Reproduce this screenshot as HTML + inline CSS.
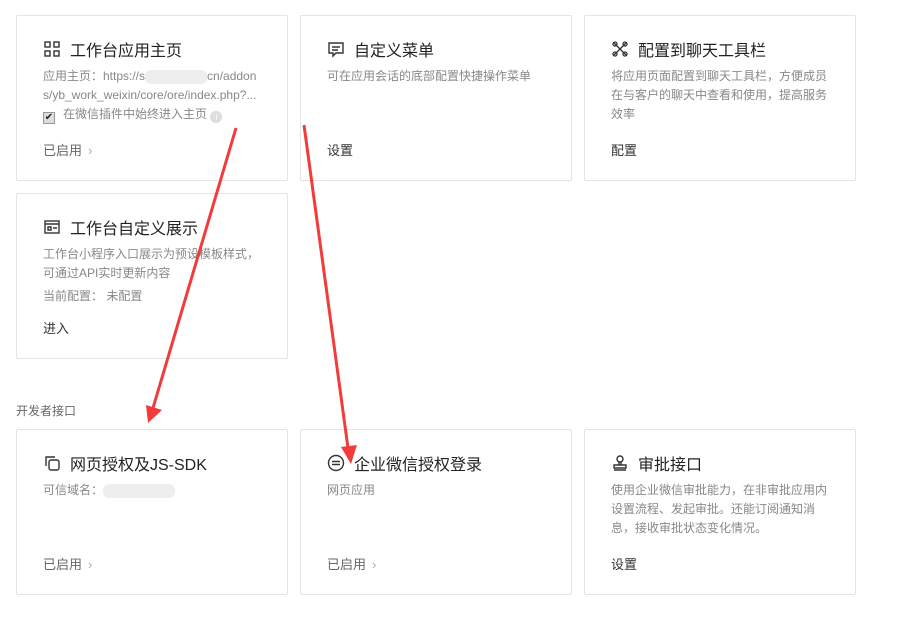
<!DOCTYPE html>
<html><head><meta charset="utf-8"><style>
*{margin:0;padding:0;box-sizing:border-box}
body{width:913px;height:620px;background:#fff;font-family:"Liberation Sans","Noto Sans CJK SC",sans-serif;position:relative;overflow:hidden}
.card{position:absolute;width:272px;height:166px;border:1px solid #e4e4e4;border-radius:2px;background:#fff}
.t{position:absolute;left:26px;top:23px;font-size:16px;color:#222;display:flex;align-items:center;height:20px}
.t svg{margin-right:9px}
.d{position:absolute;left:26px;top:51px;width:224px;font-size:12px;color:#888;line-height:19px}
.s{position:absolute;left:26px;top:124px;font-size:13px;color:#666}
.s i{font-style:normal;color:#aaa;margin-left:6px}
.l{position:absolute;left:26px;top:124px;font-size:13px;color:#333}
.blur{display:inline-block;background:#eee;height:14px;vertical-align:middle;border-radius:6px}
.sec{position:absolute;left:16px;top:402px;font-size:12px;color:#666}
.nw{white-space:nowrap;overflow:hidden}
</style></head><body>
<div class="card" style="left:16px;top:15px">
 <div class="t"><svg width="18" height="18" viewBox="0 0 18 18" fill="none" stroke="#333" stroke-width="1.4"><rect x="2" y="2" width="5" height="5"/><rect x="11" y="2" width="5" height="5"/><rect x="2" y="11" width="5" height="5"/><rect x="11" y="11" width="5" height="5"/></svg>工作台应用主页</div>
 <div class="d"><div class="nw">应用主页：https://s<span class="blur" style="width:62px"></span>cn/addon</div><div class="nw">s/yb_work_weixin/core/ore/index.php?...</div><div class="nw"><span style="display:inline-block;width:12px;height:12px;border:1px solid #999;background:#ddd;vertical-align:-2px;margin-right:8px;font-size:10px;line-height:10px;color:#222;text-align:center">✔</span>在微信插件中始终进入主页 <span style="display:inline-block;width:12px;height:12px;border-radius:50%;background:#ddd;color:#fff;font-size:9px;text-align:center;line-height:12px;vertical-align:-2px">i</span></div></div>
 <div class="s">已启用<i>›</i></div>
</div>
<div class="card" style="left:300px;top:15px">
 <div class="t"><svg width="18" height="18" viewBox="0 0 18 18" fill="none" stroke="#333" stroke-width="1.4"><path d="M2 3h14v10H9l-3 3v-3H2z"/><path d="M5 7h8M5 10h6"/></svg>自定义菜单</div>
 <div class="d">可在应用会话的底部配置快捷操作菜单</div>
 <div class="l">设置</div>
</div>
<div class="card" style="left:584px;top:15px">
 <div class="t"><svg width="18" height="18" viewBox="0 0 18 18" fill="none" stroke="#333" stroke-width="1.3"><path d="M3 3l12 12M15 3L3 15"/><circle cx="4" cy="4" r="2"/><circle cx="14" cy="4" r="2"/><circle cx="4" cy="14" r="2"/><circle cx="14" cy="14" r="2"/></svg>配置到聊天工具栏</div>
 <div class="d">将应用页面配置到聊天工具栏，方便成员在与客户的聊天中查看和使用，提高服务效率</div>
 <div class="l">配置</div>
</div>
<div class="card" style="left:16px;top:193px">
 <div class="t"><svg width="18" height="18" viewBox="0 0 18 18" fill="none" stroke="#333" stroke-width="1.4"><rect x="2" y="3" width="14" height="12"/><path d="M2 6h14M5 9h3v3H5zM10 10h4"/></svg>工作台自定义展示</div>
 <div class="d">工作台小程序入口展示为预设模板样式，可通过API实时更新内容<div style="margin-top:4px">当前配置： 未配置</div></div>
 <div class="l">进入</div>
</div>
<div class="sec">开发者接口</div>
<div class="card" style="left:16px;top:429px">
 <div class="t"><svg width="18" height="18" viewBox="0 0 18 18" fill="none" stroke="#333" stroke-width="1.4"><path d="M12 3H3v9"/><rect x="6" y="6" width="10" height="10" rx="2"/></svg>网页授权及JS-SDK</div>
 <div class="d">可信域名：<span class="blur" style="width:72px"></span></div>
 <div class="s">已启用<i>›</i></div>
</div>
<div class="card" style="left:300px;top:429px">
 <div class="t"><svg width="18" height="18" viewBox="0 0 18 18" fill="none" stroke="#333" stroke-width="1.4"><circle cx="9" cy="9" r="7.5"/><path d="M5 7.5h8M5 10.5h8"/></svg>企业微信授权登录</div>
 <div class="d">网页应用</div>
 <div class="s">已启用<i>›</i></div>
</div>
<div class="card" style="left:584px;top:429px">
 <div class="t"><svg width="18" height="18" viewBox="0 0 18 18" fill="none" stroke="#333" stroke-width="1.4"><circle cx="9" cy="5" r="3"/><path d="M8 8v3M10 8v3M3 11h12v3H3zM3 16h12"/></svg>审批接口</div>
 <div class="d">使用企业微信审批能力，在非审批应用内设置流程、发起审批。还能订阅通知消息，接收审批状态变化情况。</div>
 <div class="l">设置</div>
</div>
<svg width="913" height="620" style="position:absolute;left:0;top:0" fill="#f23c3c" stroke="#f23c3c">
 <line x1="236" y1="128" x2="153" y2="408" stroke-width="3"/>
 <polygon points="146,405 162,410 148,423" stroke="none"/>
 <line x1="304" y1="125" x2="348" y2="448" stroke-width="3"/>
 <polygon points="341,447 357,445 351,464" stroke="none"/>
</svg>
</body></html>
